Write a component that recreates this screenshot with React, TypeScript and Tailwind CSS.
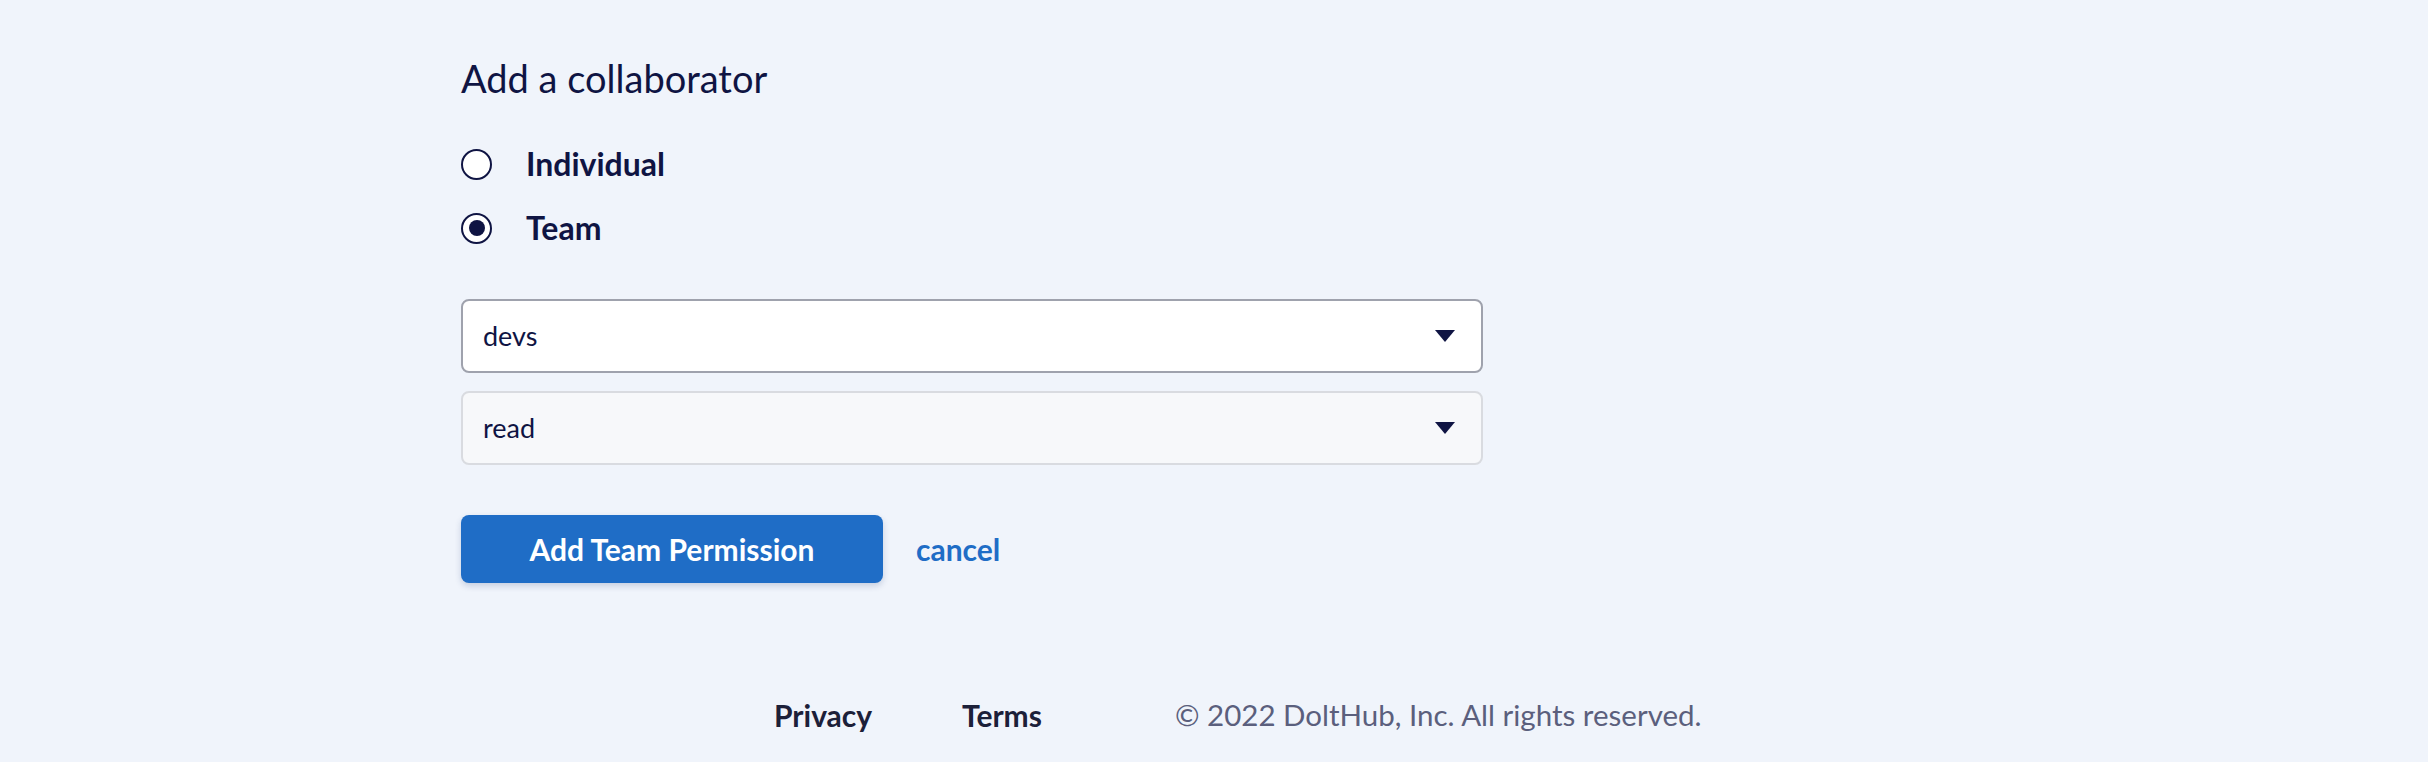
import React from "react";

function Caret() {
  return (
    <svg width="20" height="12" viewBox="0 0 20 12" className="shrink-0">
      <path d="M0 0 L20 0 L10 12 Z" fill="#0f1443" />
    </svg>
  );
}

function Radio({ checked, label }: { checked?: boolean; label: string }) {
  return (
    <label className="flex items-center h-[40px]">
      <span className="w-[31px] h-[31px] rounded-full border-[2.5px] border-[#0f1443] bg-white flex items-center justify-center shrink-0">
        {checked && <span className="w-[16px] h-[16px] rounded-full bg-[#0f1443]" />}
      </span>
      <span className="ml-[34px] text-[32px] leading-[40px] font-bold text-[#0f1443]">{label}</span>
    </label>
  );
}

export default function App() {
  return (
    <div
      className="min-h-screen w-full bg-[#f0f4fb] text-[#0f1443]"
      style={{ fontFamily: "Lato, 'Noto Sans', sans-serif" }}
    >
      <div className="pl-[461px] pt-[54px] w-[1483px]">
        <h2 className="text-[38px] leading-[48px] font-normal text-[#0f1443]">Add a collaborator</h2>
        <div className="mt-[42px] flex flex-col gap-[24px]">
          <Radio label="Individual" />
          <Radio label="Team" checked />
        </div>
        <div className="mt-[51px] flex flex-col gap-[18px] w-[1022px]">
          <div className="h-[74px] rounded-[8px] border-2 border-[#9fa2ad] bg-white flex items-center justify-between pl-[20px] pr-[26px]">
            <span className="text-[27px] text-[#0f1443]">devs</span>
            <Caret />
          </div>
          <div className="h-[74px] rounded-[8px] border-2 border-[#d9dbe0] bg-[#f7f8fa] flex items-center justify-between pl-[20px] pr-[26px]">
            <span className="text-[27px] text-[#0f1443]">read</span>
            <Caret />
          </div>
        </div>
        <div className="mt-[50px] flex items-center">
          <button className="w-[422px] h-[68px] rounded-[8px] bg-[#1f6dc6] text-white text-[30px] font-bold shadow-[0_3px_6px_rgba(30,60,120,0.2)]">
            Add Team Permission
          </button>
          <a className="ml-[33px] text-[30px] font-bold text-[#1f6dc6]">cancel</a>
        </div>
      </div>
      <footer className="mt-[112px] pl-[774px] flex items-center h-[40px] text-[30px]">
        <span className="w-[188px] font-bold text-[#1c2039]">Privacy</span>
        <span className="w-[213px] font-bold text-[#1c2039]">Terms</span>
        <span className="text-[29.5px] text-[#5b5f7d]">© 2022 DoltHub, Inc. All rights reserved.</span>
      </footer>
    </div>
  );
}
